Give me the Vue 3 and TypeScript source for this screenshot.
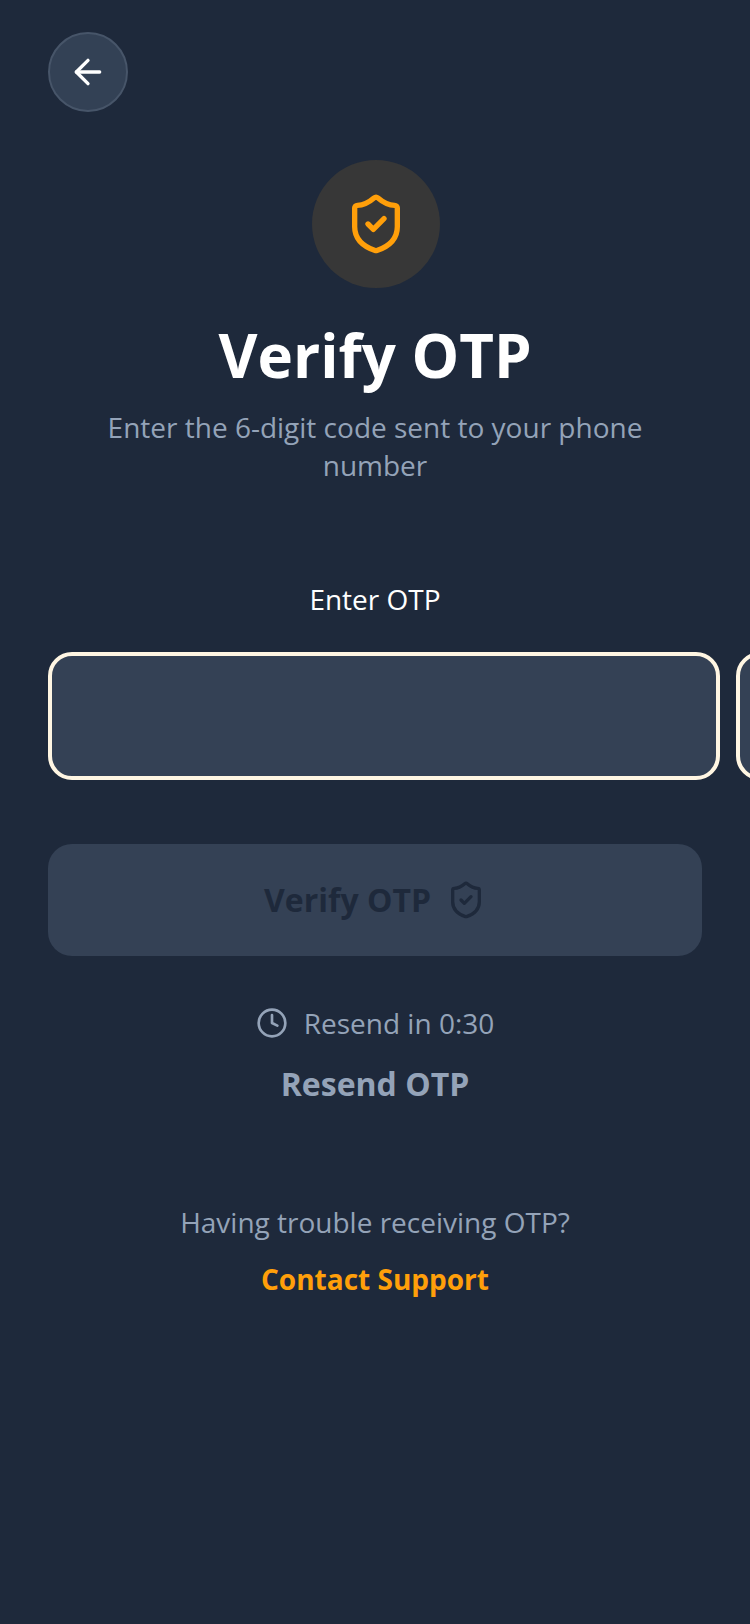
<script setup lang="ts">
const boxes: number[] = [0, 1];
</script>

<template>
  <main class="screen">
    <button class="back" aria-label="Back">
      <svg width="40" height="40" viewBox="0 0 24 24" fill="none" stroke="#fff" stroke-width="2" stroke-linecap="round" stroke-linejoin="round">
        <path d="M19 12H5" /><path d="M12 19l-7-7 7-7" />
      </svg>
    </button>

    <div class="hero">
      <div class="badge">
        <svg width="64" height="64" viewBox="0 0 24 24" fill="none" stroke="#ff9f0a" stroke-width="2" stroke-linecap="round" stroke-linejoin="round">
          <path d="M20 13c0 5-3.5 7.5-7.66 8.95a1 1 0 0 1-.67-.01C7.5 20.5 4 18 4 13V6a1 1 0 0 1 1-1c2 0 4.5-1.2 6.24-2.72a1.17 1.17 0 0 1 1.52 0C14.51 3.81 17 5 19 5a1 1 0 0 1 1 1z" />
          <path d="m9 12 2 2 4-4" />
        </svg>
      </div>
      <h1>Verify OTP</h1>
      <p class="sub">Enter the 6-digit code sent to your phone number</p>
    </div>

    <div class="label">Enter OTP</div>
    <div class="otp-row">
      <div v-for="b in boxes" :key="b" class="otp-box"></div>
    </div>

    <button class="verify">
      <span class="verify-text">Verify OTP</span>
      <svg width="40" height="40" viewBox="0 0 24 24" fill="none" stroke="#1e293b" stroke-width="2" stroke-linecap="round" stroke-linejoin="round">
        <path d="M20 13c0 5-3.5 7.5-7.66 8.95a1 1 0 0 1-.67-.01C7.5 20.5 4 18 4 13V6a1 1 0 0 1 1-1c2 0 4.5-1.2 6.24-2.72a1.17 1.17 0 0 1 1.52 0C14.51 3.81 17 5 19 5a1 1 0 0 1 1 1z" />
        <path d="m9 12 2 2 4-4" />
      </svg>
    </button>

    <div class="timer">
      <svg width="32" height="32" viewBox="0 0 24 24" fill="none" stroke="#94a3b8" stroke-width="2" stroke-linecap="round" stroke-linejoin="round">
        <circle cx="12" cy="12" r="10" /><path d="M12 6v6l4 2" />
      </svg>
      <span>Resend in 0:30</span>
    </div>
    <div class="resend">Resend OTP</div>

    <div class="help">Having trouble receiving OTP?</div>
    <div class="support">Contact Support</div>
  </main>
</template>

<style>
html, body { margin: 0; background: #1e293b; }
</style>

<style scoped>
.screen {
  box-sizing: border-box;
  width: 750px;
  height: 1624px;
  overflow: hidden;
  padding: 32px 0 0 48px;
  background: #1e293b;
  font-family: "Open Sans", sans-serif;
  display: flex;
  flex-direction: column;
}
.back {
  box-sizing: border-box;
  width: 80px;
  height: 80px;
  padding: 0;
  border-radius: 50%;
  border: 2px solid #475569;
  background: #334155;
  display: flex;
  align-items: center;
  justify-content: center;
}
.hero {
  width: 654px;
  margin-top: 48px;
  display: flex;
  flex-direction: column;
  align-items: center;
}
.badge {
  width: 128px;
  height: 128px;
  margin-left: 2px;
  border-radius: 50%;
  background: #373737;
  display: flex;
  align-items: center;
  justify-content: center;
}
h1 {
  margin: 25px 0 0;
  font-size: 60px;
  line-height: 84px;
  font-weight: 700;
  color: #fff;
}
.sub {
  margin: 11px 0 0;
  width: 580px;
  text-align: center;
  font-size: 28px;
  line-height: 38px;
  color: #94a3b8;
}
.label {
  width: 654px;
  margin-top: 96px;
  text-align: center;
  font-size: 28px;
  line-height: 38px;
  color: #fff;
}
.otp-row {
  margin-top: 34px;
  display: flex;
  gap: 16px;
}
.otp-box {
  box-sizing: border-box;
  flex: none;
  width: 672px;
  height: 128px;
  border: 4px solid #fff6e3;
  border-radius: 24px;
  background: #344155;
}
.verify {
  margin-top: 64px;
  width: 654px;
  height: 112px;
  border: 0;
  padding: 0;
  border-radius: 24px;
  background: #344155;
  color: #1e293b;
  font-family: inherit;
  font-size: 32px;
  font-weight: 700;
  display: flex;
  align-items: center;
  justify-content: center;
  gap: 15px;
}
.verify-text {
  margin-bottom: 2px;
}
.timer {
  width: 654px;
  margin-top: 47px;
  display: flex;
  align-items: center;
  justify-content: center;
  gap: 16px;
  font-size: 28px;
  line-height: 40px;
  color: #94a3b8;
}
.resend {
  width: 654px;
  margin-top: 19px;
  text-align: center;
  font-size: 32px;
  line-height: 44px;
  font-weight: 700;
  color: #94a3b8;
}
.help {
  width: 654px;
  margin-top: 97px;
  text-align: center;
  font-size: 28px;
  line-height: 38px;
  color: #94a3b8;
}
.support {
  width: 654px;
  margin-top: 18px;
  text-align: center;
  font-size: 28px;
  line-height: 40px;
  font-weight: 700;
  color: #ff9f0a;
}
</style>
